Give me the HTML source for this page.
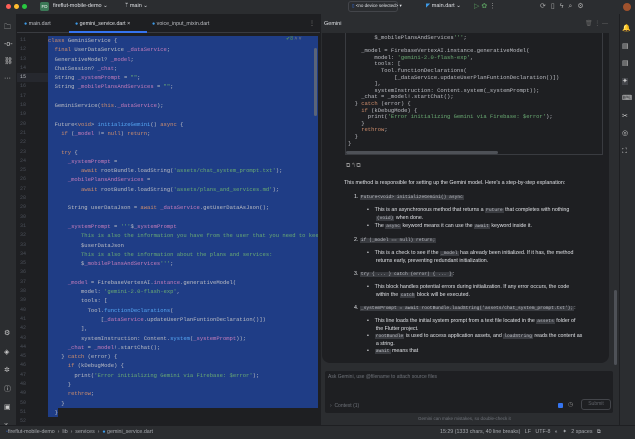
<!DOCTYPE html>
<html><head><meta charset="utf-8"><style>
*{margin:0;padding:0;box-sizing:border-box}
body{width:635px;height:439px;overflow:hidden;background:#1e1f22;font-family:"Liberation Sans",sans-serif;color:#bcbec4;position:relative}
.a{position:absolute;white-space:pre}
.m{font-family:"Liberation Mono",monospace}
.code{font-size:5.5px;line-height:9.3px}
.ln{color:#4b5059;font-size:5px;width:18px;text-align:right;left:8px}
.k{color:#cf8e6d}.s{color:#6aab73}.f{color:#56a8f5}.p{color:#c77dbb}.c{color:#bcbec4}
.gc{font-size:5.5px;line-height:6.6px}
.t{font-size:5.3px;color:#dfe1e5}
.il{font-family:"Liberation Mono",monospace;font-size:4.6px;background:#393b40;color:#bcbec4;padding:0 1px}
</style></head><body>
<div class="a" style="left:0;top:0;width:635px;height:14px;background:#2b2d30"></div>
<div class="a" style="left:6px;top:4px;width:5px;height:5px;border-radius:50%;background:#ff5f57"></div>
<div class="a" style="left:14px;top:4px;width:5px;height:5px;border-radius:50%;background:#febc2e"></div>
<div class="a" style="left:22px;top:4px;width:5px;height:5px;border-radius:50%;background:#28c840"></div>
<div class="a" style="left:40px;top:2px;width:9px;height:9px;border-radius:2px;background:#3b7a57;font-size:4.5px;color:#fff;text-align:center;line-height:9px">FD</div>
<div class="a" style="left:53px;top:3px;font-size:5.5px;color:#dfe1e5">fireflut-mobile-demo ⌄</div>
<div class="a" style="left:125px;top:3px;font-size:5.5px;color:#dfe1e5">ᛘ main ⌄</div>
<div class="a" style="left:348px;top:1px;width:50px;height:11px;border:1px solid #43454a;border-radius:3px"></div>
<div class="a" style="left:352px;top:3px;font-size:4.5px;color:#dfe1e5"><span style="color:#3574f0">▯</span> &lt;no device selected&gt; ▾</div>
<div class="a" style="left:426px;top:3px;font-size:5.5px;color:#dfe1e5"><span style="color:#3d9be9">◤</span> main.dart ⌄</div>
<div class="a" style="left:474px;top:2px;font-size:7px;color:#57965c">▷ ✿ <span style="color:#999">⋮</span></div>
<div class="a" style="left:540px;top:2px;font-size:7px;color:#aaa;letter-spacing:5px">⟳▯ϟ⌕⚙</div>
<div class="a" style="left:623px;top:3px;width:8px;height:8px;border-radius:50%;background:#a0522d"></div>
<div class="a" style="left:0;top:14px;width:17px;height:411px;background:#2b2d30;border-right:1px solid #1e1f22"></div>
<div class="a" style="left:4px;top:19px;font-size:7px;color:#ccc;line-height:17px">🗀<br>-o-<br>⛓<br>···</div>
<div class="a" style="left:4px;top:325px;font-size:7px;color:#ccc;line-height:18.5px">⚙<br>◈<br>✲<br>ⓘ<br>▣<br>ᛘ</div>
<div class="a" style="left:17px;top:14px;width:303px;height:19px;background:#1e1f22;border-bottom:1px solid #393b40"></div>
<div class="a" style="left:24px;top:21px;font-size:5.3px;color:#bcbec4"><span style="color:#3d9be9">●</span> main.dart</div>
<div class="a" style="left:75px;top:21px;font-size:5.3px;color:#dfe1e5"><span style="color:#3d9be9">●</span> gemini_service.dart ×</div>
<div class="a" style="left:69px;top:31px;width:78px;height:2px;background:#3574f0"></div>
<div class="a" style="left:152px;top:21px;font-size:5.3px;color:#bcbec4"><span style="color:#3d9be9">●</span> voice_input_mixin.dart</div>
<div class="a" style="left:309px;top:20px;font-size:6px;color:#888">⋮</div>
<div class="a" style="left:48px;top:36px;width:270px;height:372px;background:#1f3d86"></div>
<div class="a" style="left:48px;top:408px;width:10px;height:9px;background:#1f3d86"></div>
<div class="a" style="left:17px;top:73px;width:31px;height:9px;background:#26282e"></div>
<div class="a" style="left:286px;top:36px;font-size:5px;color:#57965c">✔8 <span style="color:#888">˄ ˅</span></div>
<div class="a" style="left:314px;top:48px;width:3px;height:68px;background:#5a6478;border-radius:2px"></div>
<div class="a m code ln" style="top:36px;color:#4b5059">11
12
13
14
<span style="color:#bcbec4">15</span>
16
17
18
19
20
21
22
23
24
25
26
27
28
29
30
31
32
33
34
35
36
37
38
39
40
41
42
43
44
45
46
47
48
49
50
51
52</div>
<div class="a m code c" style="left:48px;top:36px;width:270px;overflow:hidden"><span class="k">class</span> GeminiService {
  <span class="k">final</span> UserDataService <span class="p">_dataService</span>;
  GenerativeModel? <span class="p">_model</span>;
  ChatSession? <span class="p">_chat</span>;
  String <span class="p">_systemPrompt</span> = <span class="s">""</span>;
  String <span class="p">_mobilePlansAndServices</span> = <span class="s">""</span>;

  GeminiService(<span class="k">this</span>.<span class="p">_dataService</span>);

  Future&lt;<span class="k">void</span>&gt; <span class="f">initializeGemini</span>() <span class="k">async</span> {
    <span class="k">if</span> (<span class="p">_model</span> != <span class="k">null</span>) <span class="k">return</span>;

    <span class="k">try</span> {
      <span class="p">_systemPrompt</span> =
          <span class="k">await</span> rootBundle.loadString(<span class="s">'assets/chat_system_prompt.txt'</span>);
      <span class="p">_mobilePlansAndServices</span> =
          <span class="k">await</span> rootBundle.loadString(<span class="s">'assets/plans_and_services.md'</span>);

      String userDataJson = <span class="k">await</span> <span class="p">_dataService</span>.getUserDataAsJson();

      <span class="p">_systemPrompt</span> = <span class="s">'''</span>$<span class="p">_systemPrompt</span>
<span class="s">          This is also the information you have from the user that you need to kee</span>
          $userDataJson
<span class="s">          This is also the information about the plans and services:</span>
          $<span class="p">_mobilePlansAndServices</span><span class="s">'''</span>;

      <span class="p">_model</span> = FirebaseVertexAI.<span class="p">instance</span>.generativeModel(
          model: <span class="s">'gemini-2.0-flash-exp'</span>,
          tools: [
            Tool.<span class="f">functionDeclarations</span>(
                [<span class="p">_dataService</span>.updateUserPlanFuntionDeclaration()])
          ],
          systemInstruction: Content.<span class="f">system</span>(<span class="p">_systemPrompt</span>));
      <span class="p">_chat</span> = <span class="p">_model</span>!.startChat();
    } <span class="k">catch</span> (error) {
      <span class="k">if</span> (kDebugMode) {
        print(<span class="s">'Error initializing Gemini via Firebase: $error'</span>);
      }
      <span class="k">rethrow</span>;
    }
  }
</div>
<div class="a" style="left:0;top:425px;width:635px;height:14px;background:#2b2d30;border-top:1px solid #1e1f22"></div>
<div class="a" style="left:6px;top:429px;font-size:5.3px;color:#a8abb0"><span style="color:#3574f0">▫</span>fireflut-mobile-demo  ›  lib  ›  services  ›  <span style="color:#3d9be9">●</span> gemini_service.dart</div>
<div class="a" style="left:440px;top:429px;font-size:5.3px;color:#a8abb0">15:29 (1333 chars, 40 line breaks)   LF   UTF-8   ◐   ✦   2 spaces   ⧉</div>
<div class="a" style="left:320px;top:14px;width:299px;height:411px;background:#2b2d30;border-left:1px solid #1e1f22"></div>
<div class="a" style="left:324px;top:21px;font-size:5.5px;color:#dfe1e5">Gemini</div>
<div class="a" style="left:585px;top:20px;font-size:6px;color:#666">🗑 ⋮ —</div>
<div class="a" style="left:322px;top:33px;width:287px;height:110px;background:#1e1f22"></div>
<div class="a" style="left:322px;top:143px;width:287px;height:220px;background:#1e1f22;border-radius:0 0 8px 8px"></div>
<div class="a" style="left:345px;top:33px;width:258px;height:122px;border:1px solid #393b40;border-top:none;background:#1e1f22"></div>
<div class="a" style="left:346px;top:151px;width:152px;height:3px;background:#4e5157;border-radius:2px"></div>
<div class="a m gc c" style="left:348px;top:35px">        $_mobilePlansAndServices<span class="s">'''</span>;

    _model = FirebaseVertexAI.instance.generativeModel(
        model: <span class="s">'gemini-2.0-flash-exp'</span>,
        tools: [
          Tool.functionDeclarations(
              [_dataService.updateUserPlanFuntionDeclaration()])
        ],
        systemInstruction: Content.system(_systemPrompt));
    _chat = _model!.startChat();
  } <span class="k">catch</span> (error) {
    <span class="k">if</span> (kDebugMode) {
      print(<span class="s">'Error initializing Gemini via Firebase: $error'</span>);
    }
    <span class="k">rethrow</span>;
  }
}</div>
<div class="a" style="left:346px;top:163px;font-size:6px;color:#999">⧉ ↰ ⧉</div>
<div class="a t" style="left:344px;top:180px">This method is responsible for setting up the Gemini model. Here's a step-by-step explanation:</div>
<div class="a t" style="left:354px;top:194px">1. <span class="il">Future&lt;void&gt; initializeGemini() async</span></div>
<div class="a t" style="left:367px;top:207px;line-height:7.5px">•    This is an asynchronous method that returns a <span class="il">Future</span> that completes with nothing
      <span class="il">(void)</span> when done.</div>
<div class="a t" style="left:367px;top:223px">•    The <span class="il">async</span> keyword means it can use the <span class="il">await</span> keyword inside it.</div>
<div class="a t" style="left:354px;top:237px">2. <span class="il">if (_model == null) return;</span></div>
<div class="a t" style="left:367px;top:250px;line-height:7.5px">•    This is a check to see if the <span class="il">_model</span> has already been initialized. If it has, the method
      returns early, preventing redundant initialization.</div>
<div class="a t" style="left:354px;top:271px">3. <span class="il">try { ... } catch (error) { ... }</span>:</div>
<div class="a t" style="left:367px;top:284px;line-height:7.5px">•    This block handles potential errors during initialization. If any error occurs, the code
      within the <span class="il">catch</span> block will be executed.</div>
<div class="a t" style="left:354px;top:305px">4. <span class="il">_systemPrompt = await rootBundle.loadString('assets/chat_system_prompt.txt');</span>:</div>
<div class="a t" style="left:367px;top:318px;line-height:7.5px">•    This line loads the initial system prompt from a text file located in the <span class="il">assets</span> folder of
      the Flutter project.
•    <span class="il">rootBundle</span> is used to access application assets, and <span class="il">loadString</span> reads the content as
      a string.
•    <span class="il">await</span> means that</div>
<div class="a" style="left:614px;top:290px;width:3px;height:75px;background:#4e5157;border-radius:2px"></div>
<div class="a" style="left:325px;top:371px;width:288px;height:42px;background:#1e1f22;border-radius:2px"></div>
<div class="a" style="left:328px;top:374px;font-size:5px;color:#6f737a">Ask Gemini, use @filename to attach source files</div>
<div class="a" style="left:330px;top:403px;font-size:5px;color:#6f737a">›  Context (1)</div>
<div class="a" style="left:558px;top:403px;width:5px;height:5px;background:#3574f0;border-radius:1px"></div>
<div class="a" style="left:568px;top:401px;font-size:6px;color:#888">◷</div>
<div class="a" style="left:581px;top:399px;width:30px;height:11px;border:1px solid #43454a;border-radius:3px;font-size:5px;color:#5f6268;text-align:center;line-height:9px">Submit</div>
<div class="a" style="left:418px;top:416px;font-size:4.5px;color:#6f737a">Gemini can make mistakes, so double-check it</div>
<div class="a" style="left:619px;top:14px;width:16px;height:411px;background:#2b2d30;border-left:1px solid #1e1f22"></div>
<div class="a" style="left:622px;top:20px;font-size:7px;color:#ccc;line-height:17.5px">🔔<br>▤<br>▤<br><span style="background:#43454a">✦</span><br>⌨<br>✂<br>◎<br>⛶</div>
</body></html>
